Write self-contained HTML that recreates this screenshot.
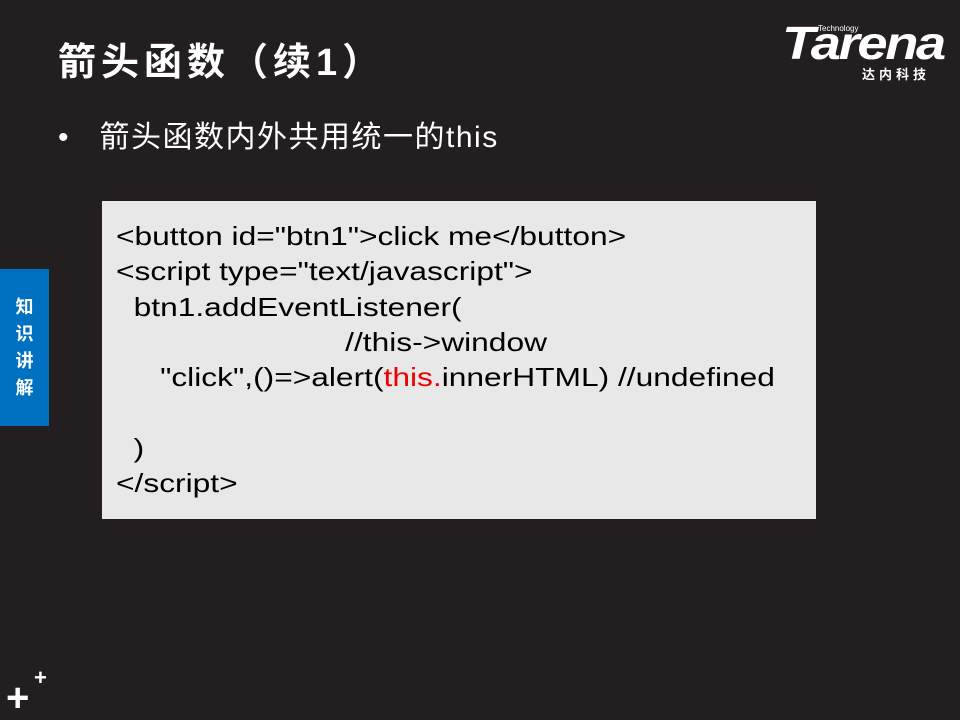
<!DOCTYPE html>
<html><head><meta charset="utf-8"><style>
body{margin:0;width:960px;height:720px;background:#231f20;position:relative;overflow:hidden;font-family:"Liberation Sans","Noto Sans CJK SC",sans-serif;color:#fff}
.t{position:absolute;left:58px;top:36px;font-size:38px;font-weight:bold;line-height:54px;letter-spacing:5px}
.b{position:absolute;left:58px;top:118px;font-size:30px;line-height:40px;letter-spacing:1.5px}
.code{position:absolute;left:102px;top:201px;width:714px;height:318px;background:#e8e8e8;}
.code pre{margin:0;position:absolute;left:14px;top:18px;color:#000;font-family:"Liberation Sans",sans-serif;font-size:26px;line-height:35.3px;transform:scaleX(1.22);transform-origin:0 0}
.side{position:absolute;left:0;top:269px;width:49px;height:157px;background:#0070c0;font-size:18px;font-weight:bold;line-height:27px;text-align:center;padding-top:25px;box-sizing:border-box}
.logo{position:absolute;left:782px;top:20px;font-size:46px;font-weight:bold;font-style:italic;letter-spacing:-2px;line-height:46px;transform:scaleX(1.18);transform-origin:0 0}
.tech{position:absolute;left:818px;top:24px;font-size:8px}
.cn{position:absolute;left:862px;top:64px;font-size:13px;font-weight:bold;letter-spacing:4px}
</style></head><body>
<div class="t">箭头函数（续1）</div>
<div class="b">•&nbsp;&nbsp;&nbsp;箭头函数内外共用统一的this</div>
<div class="code"><pre>&lt;button id="btn1"&gt;click me&lt;/button&gt;
&lt;script type="text/javascript"&gt;
  btn1.addEventListener(
                          //this-&gt;window
     "click",()=&gt;alert(<span style="color:#e00">this.</span>innerHTML) //undefined

  )
&lt;/script&gt;</pre></div>
<div class="side">知<br>识<br>讲<br>解</div>
<div class="logo">Tarena</div>
<div class="tech">Technology</div>
<div class="cn">达内科技</div>
<div style="position:absolute;left:6px;top:683px;font-size:40px;font-weight:bold;line-height:30px">+</div>
<div style="position:absolute;left:34px;top:668px;font-size:22px;font-weight:bold;line-height:20px">+</div>
</body></html>
